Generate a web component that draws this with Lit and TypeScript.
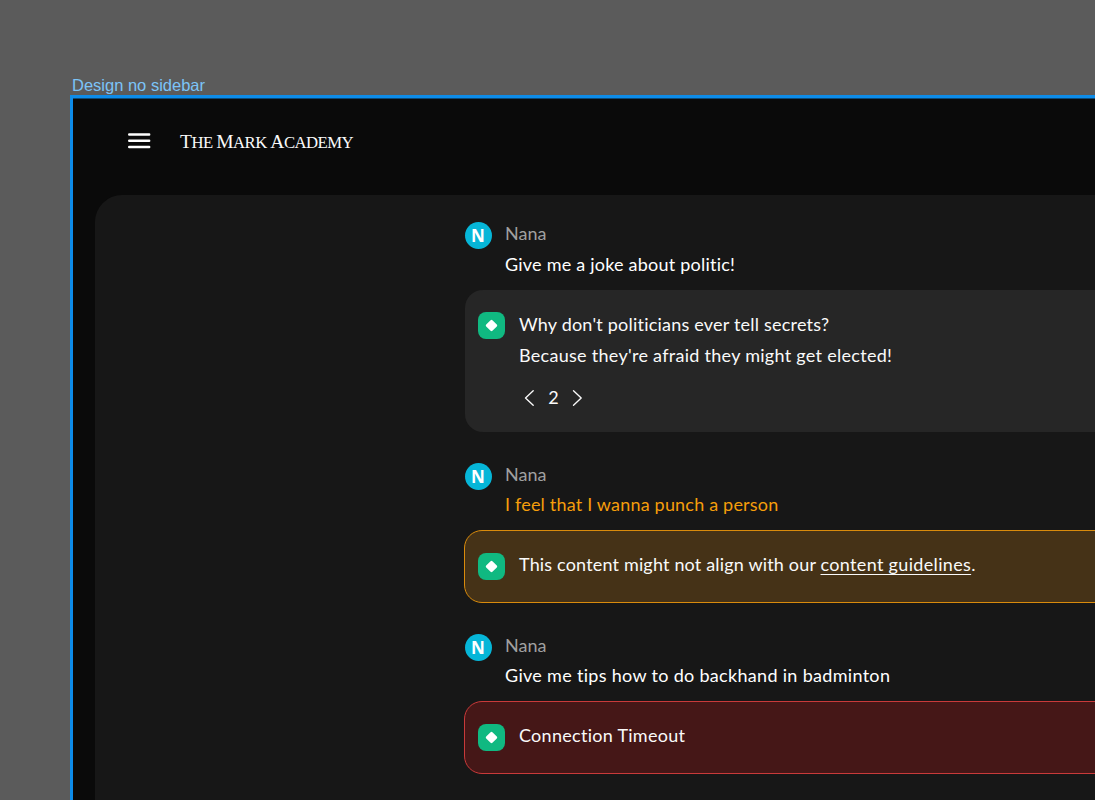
import { LitElement, html, css, svg, nothing } from "lit";
import { customElement, property } from "lit/decorators.js";

type Tone = "plain" | "warning" | "error";

interface Exchange {
  id: string;
  author: string;
  prompt: string;
  tone: Tone;
  lines: { id: string; text: string }[];
  link?: string;
  page?: number;
}

const exchanges: Exchange[] = [
  {
    id: "q1",
    author: "Nana",
    prompt: "Give me a joke about politic!",
    tone: "plain",
    lines: [
      { id: "a1", text: "Why don't politicians ever tell secrets?" },
      { id: "a2", text: "Because they're afraid they might get elected!" },
    ],
    page: 2,
  },
  {
    id: "q2",
    author: "Nana",
    prompt: "I feel that I wanna punch a person",
    tone: "warning",
    lines: [{ id: "a3", text: "This content might not align with our " }],
    link: "content guidelines",
  },
  {
    id: "q3",
    author: "Nana",
    prompt: "Give me tips how to do backhand in badminton",
    tone: "error",
    lines: [{ id: "a4", text: "Connection Timeout" }],
  },
];

@customElement("chat-exchange")
class ChatExchange extends LitElement {
  @property({ attribute: false }) item!: Exchange;

  static styles = css`
    :host { display: block; white-space: nowrap; font-variant-ligatures: none; }
    .user { display: flex; gap: 13px; height: 71px; box-sizing: border-box; }
    .avatar {
      width: 27px; height: 27px; margin-top: 3px; border-radius: 50%;
      background: #06b6d8; color: #fff; flex: none;
      display: flex; align-items: center; justify-content: center;
      font: 700 17px/27px "Open Sans", sans-serif;
      text-indent: -1px;
    }
    .body { margin-top: -1px; }
    .name { color: #a0a0a0; height: 30.5px; }
    .prompt { color: #fff; }
    .warning .prompt { color: #f59e0b; }
    .card {
      display: flex; gap: 14px; box-sizing: border-box;
      padding: 19px 13px; border-radius: 18px; background: #262626;
      height: 141.5px;
    }
    .warning .card, .error .card {
      height: 73px; margin-left: -1px; margin-top: -1px;
      border: 1px solid #d98b0c; background: #453217;
    }
    .error .card { border-color: #c93a3a; background: #451717; }
    .bot { flex: none; display: block; width: 27px; height: 27px; margin-top: 3px; }
    .text { color: #fafafa; }
    .warning .text, .error .text { margin-top: -1px; }
    .link { text-decoration: underline; text-decoration-thickness: 1px; text-underline-offset: 3px; text-decoration-skip-ink: none; letter-spacing: 0.33px; }
    .pager { display: flex; align-items: center; height: 24px; margin-top: 15px; padding-left: 5px; }
    .chev { display: block; width: 11px; height: 18px; }
    .num { width: 37px; text-align: center; line-height: 22px; height: 24px; color: #fafafa; }
    .q1 { letter-spacing: 0.22px; }
    .q2 { letter-spacing: 0.19px; }
    .q3 { letter-spacing: 0.31px; }
    .a1 { letter-spacing: 0.21px; }
    .a2 { letter-spacing: 0.285px; }
    .a3 { letter-spacing: 0.17px; }
    .a4 { letter-spacing: 0.28px; }
  `;

  render() {
    const { id, author, prompt, tone, lines, link, page } = this.item;
    return html`
      <div class=${tone}>
        <div class="user">
          <div class="avatar">N</div>
          <div class="body">
            <div class="name">${author}</div>
            <div class="prompt"><span class=${id}>${prompt}</span></div>
          </div>
        </div>
        <div class="card">
          <svg class="bot" viewBox="0 0 27 27">
            <rect width="27" height="27" rx="8" fill="#10b981" />
            <rect x="9.1" y="9.1" width="8.8" height="8.8" rx="1.3" fill="#fff" transform="rotate(45 13.5 13.5)" />
          </svg>
          <div>
            ${lines.map(
              (l) => html`<div class="text"><span class=${l.id}>${l.text}</span>${link
                ? html`<span class="link">${link}</span>.`
                : nothing}</div>`
            )}
            ${page
              ? html`<div class="pager">
                  ${this.chevron("M9.2 1.7 L1.5 9 L9.2 16.3")}
                  <span class="num">${page}</span>
                  ${this.chevron("M1.5 1.7 L9.2 9 L1.5 16.3")}
                </div>`
              : nothing}
          </div>
        </div>
      </div>
    `;
  }

  private chevron(d: string) {
    return html`<svg class="chev" viewBox="0 0 11 18" fill="none" stroke="#fafafa" stroke-width="1.35" stroke-linecap="round" stroke-linejoin="round">
      ${svg`<path d=${d} />`}
    </svg>`;
  }
}

@customElement("app-root")
class AppRoot extends LitElement {
  static styles = css`
    :host { display: block; width: 100%; height: 800px; overflow: hidden; background: #5b5b5b; }
    .canvas { height: 800px; box-sizing: border-box; padding: 75px 0 0 70px; overflow: hidden; display: flex; flex-direction: column; }
    .label { height: 20px; padding-left: 2px; color: #7cc4f8; font: 16.5px/20px "Liberation Sans", sans-serif; white-space: nowrap; flex: none; }
    .frame {
      flex: 1; min-height: 0; border-left: 3px solid #0d8ce9; border-top: 3px solid #0d8ce9;
      background: #0a0a0a; display: flex; flex-direction: column; box-shadow: inset 0 1px 0 #0b4a78;
    }
    .header { height: 97px; flex: none; display: flex; padding: 34px 0 0 55px; box-sizing: border-box; }
    .menu { display: block; width: 23px; height: 18px; }
    .brand { margin-left: 29px; color: #fafafa; font: 16.7px/20px "Liberation Serif", serif; letter-spacing: -0.53px; white-space: nowrap; }
    .big { font-size: 19.5px; }
    .panel {
      flex: 1; min-height: 0; margin-left: 22px; padding: 24px 0 0 370px; border-top-left-radius: 27px;
      background: #171717; overflow: hidden;
      font: 18px/31px Lato, sans-serif;
    }
    .thread { width: 760px; display: flex; flex-direction: column; gap: 28px; }
  `;

  render() {
    return html`
      <div class="canvas">
        <div class="label">Design no sidebar</div>
        <div class="frame">
          <div class="header">
            <svg class="menu" viewBox="0 0 23 18" stroke="#fff" stroke-width="2.4" stroke-linecap="round">
              <path d="M1.2 2.5 H21.2 M1.2 8.8 H21.2 M1.2 15 H21.2" />
            </svg>
            <div class="brand"><span class="big">T</span>HE <span class="big">M</span>ARK <span class="big">A</span>CADEMY</div>
          </div>
          <div class="panel">
            <div class="thread">
              ${exchanges.map((e) => html`<chat-exchange .item=${e}></chat-exchange>`)}
            </div>
          </div>
        </div>
      </div>
    `;
  }
}
